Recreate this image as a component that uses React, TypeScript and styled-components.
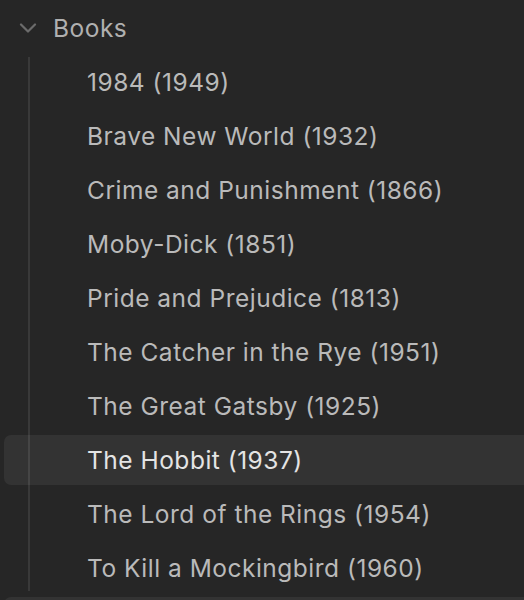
import React from "react";
import styled, { createGlobalStyle } from "styled-components";

const Global = createGlobalStyle`
  html, body { margin: 0; padding: 0; background: #262626; }
  body { font-family: Inter, "Noto Sans", sans-serif; -webkit-font-smoothing: antialiased; }
  #root { width: 524px; height: 600px; overflow: hidden; }
`;

const Tree = styled.div`
  display: flex;
  flex-direction: column;
  gap: 4px;
  padding-top: 3px;
  padding-left: 4px;
  width: 540px;
`;

const Row = styled.div<{ $active?: boolean; $indent?: number }>`
  height: 50px;
  display: flex;
  align-items: center;
  border-radius: 7px;
  padding-left: ${(p) => p.$indent ?? 0}px;
  background: ${(p) => (p.$active ? "#333333" : "transparent")};
  color: ${(p) => (p.$active ? "#e4e4e4" : "#bababa")};
  font-size: 24.5px;
  letter-spacing: 0.5px;
  white-space: nowrap;
`;

const Chevron = styled.span`
  width: 18px;
  display: flex;
  justify-content: center;
  margin-left: 15px;
  margin-right: 16px;
  color: #6b6b6b;
`;

const HeaderLabel = styled.span`
  color: #b0b0b0;
`;

const Children = styled.div`
  display: flex;
  flex-direction: column;
  gap: 4px;
  position: relative;
  &::before {
    content: "";
    position: absolute;
    left: 24px;
    top: 0;
    bottom: 2px;
    width: 2px;
    background: rgba(255, 255, 255, 0.09);
    pointer-events: none;
  }
`;

const books = [
  "1984 (1949)",
  "Brave New World (1932)",
  "Crime and Punishment (1866)",
  "Moby-Dick (1851)",
  "Pride and Prejudice (1813)",
  "The Catcher in the Rye (1951)",
  "The Great Gatsby (1925)",
  "The Hobbit (1937)",
  "The Lord of the Rings (1954)",
  "To Kill a Mockingbird (1960)",
];

export default function App() {
  return (
    <>
      <Global />
      <Tree>
        <Row>
          <Chevron>
            <svg width="18" height="10" viewBox="0 0 18 10" fill="none">
              <path d="M2 1.5 L9 8.5 L16 1.5" stroke="currentColor" strokeWidth="2.2" strokeLinecap="round" strokeLinejoin="round" />
            </svg>
          </Chevron>
          <HeaderLabel>Books</HeaderLabel>
        </Row>
        <Children>
          {books.map((b) => (
            <Row key={b} $indent={83} $active={b === "The Hobbit (1937)"}>
              {b}
            </Row>
          ))}
        </Children>
        <Row $active $indent={49} />
      </Tree>
    </>
  );
}
